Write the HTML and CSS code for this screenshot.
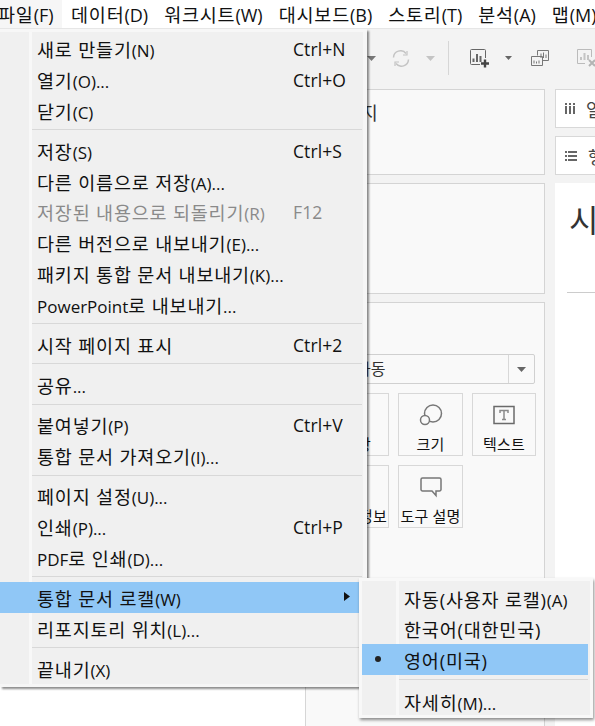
FILE: index.html
```html
<!DOCTYPE html>
<html lang="ko">
<head>
  <meta charset="UTF-8" />
  <meta name="viewport" content="width=device-width, initial-scale=1.0" />
  <title>통합 문서 로캘</title>
  <link rel="stylesheet" href="styles.css">
</head>
<body>
  <nav class="menubar">
    <span class="menubar-item open">파일<span class="en">(F)</span></span>
    <span class="menubar-item">데이터<span class="en">(D)</span></span>
    <span class="menubar-item">워크시트<span class="en">(W)</span></span>
    <span class="menubar-item">대시보드<span class="en">(B)</span></span>
    <span class="menubar-item">스토리<span class="en">(T)</span></span>
    <span class="menubar-item">분석<span class="en">(A)</span></span>
    <span class="menubar-item">맵<span class="en">(M)</span></span>
  </nav>

  <div class="toolbar">
    <svg class="caret" width="9" height="5" viewBox="0 0 9 5"><path d="M0 0h9L4.500 5z" fill="#777"/></svg>
    <svg class="refresh" width="18" height="17" viewBox="0 0 18 17" fill="none" stroke="#c4c4c4" stroke-width="1.500">
      <path d="M1.500 7.500A7 7 0 0 1 14 3.500"/><path d="M16.500 9.500A7 7 0 0 1 4 13.500"/>
      <path d="M15 1v4h-4M3 16v-4h4" stroke-width="1.200"/>
    </svg>
    <svg class="caret pale" width="9" height="5" viewBox="0 0 9 5"><path d="M0 0h9L4.500 5z" fill="#c4c4c4"/></svg>
    <span class="toolbar-sep"></span>
    <svg class="icon-new" width="20" height="19" viewBox="0 0 20 19" fill="none">
      <path d="M15.500 9V1.500a1 1 0 0 0-1-1H1.500a1 1 0 0 0-1 1v13a1 1 0 0 0 1 1H10" stroke="#666"/>
      <path d="M3.500 9.500v3.500M7 5v8M10.500 7v6" stroke="#666" stroke-width="2"/>
      <path d="M15 10.500v8M11 14.500h8" stroke="#444" stroke-width="2.400"/>
    </svg>
    <svg class="caret small" width="7" height="4" viewBox="0 0 9 5"><path d="M0 0h9L4.500 5z" fill="#666"/></svg>
    <svg class="icon-dup" width="18" height="16" viewBox="0 0 18 16" fill="none" stroke="#777">
      <path d="M6.500 5.500V.5h11v10h-6"/><path d="M.5 6.500h11v9H.5z" fill="#f3f3f3"/>
      <path d="M10 8V3.500M12.500 8V2.500M15 8V4.500M3 13.500v-3M5.500 13.500v-2M8 13.500v-3"/>
    </svg>
    <svg class="icon-clear" width="18" height="18" viewBox="0 0 18 18" fill="none">
      <path d="M14.500 8V.5H.5v14H8" stroke="#bbb"/>
      <path d="M4 11V8M7.500 11V4M11 11V6" stroke="#c4c4c4" stroke-width="2"/>
      <path d="M12 11l6 6M18 11l-6 6" stroke="#b4b4b4" stroke-width="2"/>
    </svg>
  </div>

  <main class="workspace">
    <div class="blank-side"></div>

    <div class="cards-col">
      <section class="pane pane-pages">페이지</section>
      <section class="pane pane-filters"></section>
      <section class="pane pane-marks">
        <div class="mark-select">
          <span class="mark-select-text">자동</span>
          <span class="mark-select-btn"><svg width="9" height="5" viewBox="0 0 9 5"><path d="M0 0h9L4.500 5z" fill="#666"/></svg></span>
        </div>
        <div class="mark-grid">
          <div class="mark">
            <span class="mark-icon"></span>
            <span>색상</span>
          </div>
          <div class="mark">
            <svg class="mark-icon" width="24" height="22" viewBox="0 0 24 22" fill="none" stroke="#777" stroke-width="1.500">
              <circle cx="14" cy="9.500" r="8.500"/><circle cx="6" cy="16" r="4.500" fill="#f9f9f9"/>
            </svg>
            <span>크기</span>
          </div>
          <div class="mark">
            <svg class="mark-icon" width="22" height="19" viewBox="0 0 22 19" fill="none">
              <rect x="1" y="1" width="20" height="17" stroke="#6a6a6a" stroke-width="1.500"/>
              <path d="M7 7.500V5h8v2.500M11 5v9M9 14h4" stroke="#8a8a8a" stroke-width="1.500"/>
            </svg>
            <span>텍스트</span>
          </div>
          <div class="mark">
            <span class="mark-icon"></span>
            <span>세부 정보</span>
          </div>
          <div class="mark">
            <svg class="mark-icon" width="22" height="20" viewBox="0 0 22 20" fill="none" stroke="#777" stroke-width="1.500">
              <path d="M2.500 1h17A1.500 1.500 0 0 1 21 2.500v10a1.500 1.500 0 0 1-1.500 1.500H16v4.500L12 14H2.500A1.500 1.500 0 0 1 1 12.500v-10A1.500 1.500 0 0 1 2.500 1z"/>
            </svg>
            <span>도구 설명</span>
          </div>
        </div>
      </section>
    </div>

    <div class="shelf-col">
      <div class="shelf">
        <svg width="10" height="11" viewBox="0 0 10 11" fill="#666"><path d="M0 0h2v2H0zM4 0h2v2H4zM8 0h2v2H8zM0 3h2v8H0zM4 3h2v8H4zM8 3h2v8H8z"/></svg>
        <span>열</span>
      </div>
      <div class="shelf">
        <svg width="12" height="10" viewBox="0 0 12 10" fill="#666"><path d="M0 0h2v2H0zM3 0h9v2H3zM0 4h2v2H0zM3 4h9v2H3zM0 8h2v2H0zM3 8h9v2H3z"/></svg>
        <span>행</span>
      </div>
      <div class="sheet">
        <div class="sheet-title">시</div>
        <div class="sheet-rule"></div>
      </div>
    </div>
  </main>

  <div class="menu file-menu">
    <div class="menu-item"><span>새로 만들기<span class="en">(N)</span></span><span class="shortcut">Ctrl+N</span></div>
    <div class="menu-item"><span>열기<span class="en">(O)...</span></span><span class="shortcut">Ctrl+O</span></div>
    <div class="menu-item"><span>닫기<span class="en">(C)</span></span></div>
    <div class="menu-sep"></div>
    <div class="menu-item"><span>저장<span class="en">(S)</span></span><span class="shortcut">Ctrl+S</span></div>
    <div class="menu-item"><span>다른 이름으로 저장<span class="en">(A)...</span></span></div>
    <div class="menu-item disabled"><span>저장된 내용으로 되돌리기<span class="en">(R)</span></span><span class="shortcut">F12</span></div>
    <div class="menu-item"><span>다른 버전으로 내보내기<span class="en">(E)...</span></span></div>
    <div class="menu-item"><span>패키지 통합 문서 내보내기<span class="en">(K)...</span></span></div>
    <div class="menu-item"><span><span class="en">PowerPoint</span>로 내보내기<span class="en">...</span></span></div>
    <div class="menu-sep"></div>
    <div class="menu-item"><span>시작 페이지 표시</span><span class="shortcut">Ctrl+2</span></div>
    <div class="menu-sep"></div>
    <div class="menu-item"><span>공유<span class="en">...</span></span></div>
    <div class="menu-sep"></div>
    <div class="menu-item"><span>붙여넣기<span class="en">(P)</span></span><span class="shortcut">Ctrl+V</span></div>
    <div class="menu-item"><span>통합 문서 가져오기<span class="en">(I)...</span></span></div>
    <div class="menu-sep"></div>
    <div class="menu-item"><span>페이지 설정<span class="en">(U)...</span></span></div>
    <div class="menu-item"><span>인쇄<span class="en">(P)...</span></span><span class="shortcut">Ctrl+P</span></div>
    <div class="menu-item"><span><span class="en">PDF</span>로 인쇄<span class="en">(D)...</span></span></div>
    <div class="menu-sep"></div>
    <div class="menu-item active">
      <span>통합 문서 로캘<span class="en">(W)</span></span>
      <svg class="submenu-arrow" width="6" height="9" viewBox="0 0 6 9"><path d="M0 0l6 4.500L0 9z" fill="#111"/></svg>
    </div>
    <div class="menu-item"><span>리포지토리 위치<span class="en">(L)...</span></span></div>
    <div class="menu-sep"></div>
    <div class="menu-item"><span>끝내기<span class="en">(X)</span></span></div>
  </div>

  <div class="menu locale-menu">
    <div class="menu-item"><span>자동(사용자 로캘)<span class="en">(A)</span></span></div>
    <div class="menu-item"><span>한국어(대한민국)</span></div>
    <div class="menu-item active"><span class="bullet"></span><span>영어(미국)</span></div>
    <div class="menu-sep"></div>
    <div class="menu-item"><span>자세히<span class="en">(M)...</span></span></div>
  </div>
</body>
</html>
```

FILE: styles.css
```css
body {
  font-family: "Open Sans", "Noto Sans CJK KR", sans-serif;
  font-size: 16px;
  color: #111;
  background: #fff;
  margin: 0;
  width: 595px;
  height: 726px;
  overflow: hidden;
  position: relative;
}

/* latin runs sit smaller than the hangul, like the original UI font */
.en {
  font-size: 17px;
  letter-spacing: 0;
}

/* top menu bar */
.menubar {
  display: flex;
  height: 28px;
  background: #fff;
  border-bottom: 1px solid #e6e6e6;
  white-space: nowrap;
  overflow: hidden;
}
.menubar-item {
  font-size: 18.500px;
  letter-spacing: 0.800px;
  line-height: 30px;
  padding: 0 8px;
  flex: none;
}
.menubar-item .en { font-size: 18px; }
.menubar-item.open {
  background: #f6f6f6;
  padding: 0;
  width: 62px;
  margin-right: 1px;
  text-indent: -2px;
}

/* toolbar */
.toolbar {
  height: 56px;
  box-sizing: border-box;
  padding: 2px 0 0 367px;
  background: #f3f3f3;
  display: flex;
  align-items: center;
  overflow: hidden;
}
.caret { flex: none; }
.refresh { margin-left: 16px; flex: none; }
.caret.pale { margin-left: 16px; }
.toolbar-sep {
  width: 1px;
  height: 34px;
  background: #d6d6d6;
  margin-left: 13px;
  flex: none;
}
.icon-new { margin-left: 21px; flex: none; }
.caret.small { margin-left: 15px; }
.icon-dup { margin-left: 19px; flex: none; }
.icon-clear { margin-left: 28px; flex: none; }

/* workspace below the toolbar */
.workspace {
  display: flex;
  height: 642px;
  background: #f3f3f3;
}
.blank-side {
  width: 305px;
  background: #fff;
  border-right: 1px solid #d6d6d6;
  flex: none;
}
.cards-col {
  width: 239px;
  padding-top: 4px;
  display: flex;
  flex-direction: column;
  gap: 8px;
  flex: none;
}
.pane {
  background: #f9f9f9;
  border: 1px solid #d4d4d4;
  border-left: none;
  box-sizing: border-box;
}
.pane-pages {
  height: 86px;
  font-size: 18.500px;
  letter-spacing: 0.800px;
  line-height: 46px;
  padding-left: 19px;
  color: #333;
}
.pane-filters { height: 111px; }
.pane-marks {
  flex: 1;
  padding: 51px 9px 0 19px;
  margin-bottom: -2px;
}
.mark-select {
  display: flex;
  height: 30px;
  box-sizing: border-box;
  background: #f9f9f9;
  border: 1px solid #d0d0d0;
  border-radius: 2px;
  font-size: 16px;
  line-height: 28px;
  color: #333;
}
.mark-select-text { flex: 1; padding-left: 30px; }
.mark-select-btn {
  width: 25px;
  border-left: 1px solid #d8d8d8;
  display: flex;
  align-items: center;
  justify-content: center;
}
.mark-grid {
  display: grid;
  grid-template-columns: 64px 65px 64px;
  grid-auto-rows: 63px;
  gap: 9px;
  margin-top: 9px;
}
.mark {
  border: 1px solid #d8d8d8;
  box-sizing: border-box;
  display: flex;
  flex-direction: column;
  align-items: center;
  justify-content: flex-end;
  font-size: 15px;
  letter-spacing: 0.200px;
  line-height: 20px;
  white-space: nowrap;
  padding-bottom: 1px;
}
.mark-icon { height: 22px; margin-bottom: 8px; flex: none; }

.shelf-col {
  margin-left: 10px;
  width: 60px;
  padding-top: 4px;
  display: flex;
  flex-direction: column;
  gap: 8px;
  flex: none;
}
.shelf {
  height: 39px;
  background: #fff;
  border: 1px solid #d8d8d8;
  border-right: none;
  box-sizing: border-box;
  display: flex;
  align-items: center;
  gap: 11px;
  padding-left: 9px;
  font-size: 18px;
  color: #444;
  flex: none;
}
.sheet {
  flex: 1;
  background: #fff;
  padding: 15px 0 0 12px;
}
.sheet-title { font-size: 32px; line-height: 44px; color: #333; padding-left: 2px; }
.sheet-rule { height: 1px; background: #ccc; margin-top: 50px; }

/* dropdown menus */
.menu {
  position: absolute;
  box-sizing: border-box;
  background: #f0f0f0;
  white-space: nowrap;
}
.file-menu {
  left: 0;
  top: 29px;
  width: 367px;
  height: 658px;
  padding: 4px 5px 3px 0;
  box-shadow: 2px 2px 2px rgba(0, 0, 0, 0.45), inset 0 3px 0 #f7f7f7, inset -4px 0 0 #f6f6f6, inset 0 -3px 0 #f6f6f6;
  background-image: linear-gradient(to right, #f0f0f0 29px, #f8f8f8 29px, #f8f8f8 32px, #f0f0f0 32px);
}
.locale-menu {
  left: 359px;
  top: 578px;
  width: 234px;
  height: 140px;
  padding: 4.500px 5px 0 3px;
  box-shadow: 1px 2px 3px rgba(0, 0, 0, 0.45), inset 0 0 0 3px #f8f8f8;
  background-image: linear-gradient(to right, #f8f8f8 3px, #f0f0f0 3px, #f0f0f0 37px, #f8f8f8 37px, #f8f8f8 40px, #f0f0f0 40px);
}
.menu-item {
  display: flex;
  align-items: center;
  position: relative;
  height: 30.750px;
  box-sizing: border-box;
  padding: 1.500px 0 0 37px;
  font-size: 18.500px;
  letter-spacing: 0.800px;
}
.locale-menu .menu-item { padding-left: 42px; }
.menu-item.active { background: #90c7f6; }
.menu-item.disabled { color: #8a8a8a; }
.shortcut {
  position: absolute;
  left: 293px;
  font-size: 17.500px;
  letter-spacing: 0.100px;
}
.menu-sep {
  height: 1px;
  margin: 3.750px 0 4.750px 32px;
  background: #d8d8d8;
}
.locale-menu .menu-sep { margin: 3.750px 0 6px 37px; }
.submenu-arrow {
  position: absolute;
  left: 344px;
  top: 10px;
}
.bullet {
  position: absolute;
  left: 13px;
  top: 12px;
  width: 6px;
  height: 6px;
  border-radius: 50%;
  background: #222;
}
```
